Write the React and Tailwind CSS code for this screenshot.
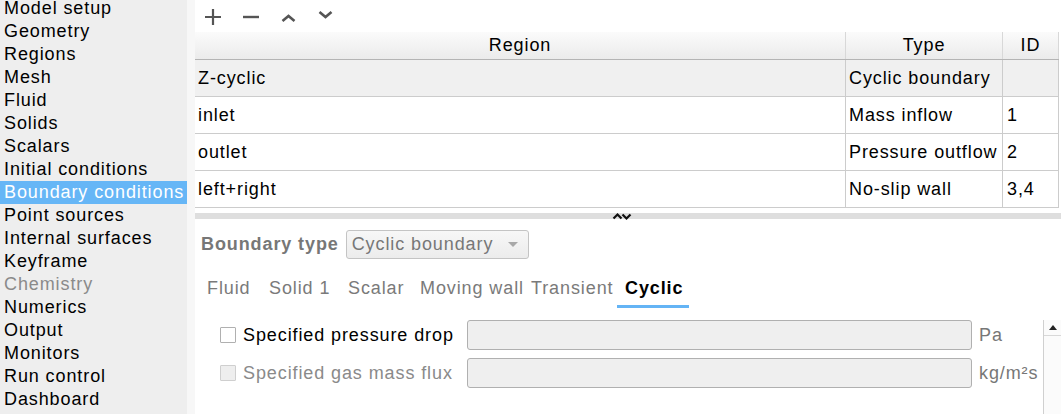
import React from 'react';

// Case setup window: section list on the left, region table + boundary editor on the right.
const sections = [
  'Model setup', 'Geometry', 'Regions', 'Mesh', 'Fluid', 'Solids', 'Scalars',
  'Initial conditions', 'Boundary conditions', 'Point sources', 'Internal surfaces',
  'Keyframe', 'Chemistry', 'Numerics', 'Output', 'Monitors', 'Run control', 'Dashboard',
];

const regions = [
  { name: 'Z-cyclic', type: 'Cyclic boundary', id: '', selected: true },
  { name: 'inlet', type: 'Mass inflow', id: '1' },
  { name: 'outlet', type: 'Pressure outflow', id: '2' },
  { name: 'left+right', type: 'No-slip wall', id: '3,4' },
];

const tabs = [
  { label: 'Fluid', w: 'w-[62px]' },
  { label: 'Solid 1', w: 'w-[79px]' },
  { label: 'Scalar', w: 'w-[72px]' },
  { label: 'Moving wall', w: 'w-[111px]' },
  { label: 'Transient', w: 'w-[94px]' },
  { label: 'Cyclic', w: 'w-[72px]', active: true },
];

function Sidebar() {
  return (
    <nav className="w-[187px] shrink-0 bg-[#eeeeee]">
      <ul>
        {sections.map(function (s, i) {
          const active = s === 'Boundary conditions';
          const muted = s === 'Chemistry';
          // list is scrolled a few pixels, so the first row shows shorter
          const size = i === 0 ? 'h-[20px] leading-[17px]' : 'h-[23px] leading-[23px]';
          return (
            <li
              key={s}
              className={
                size + ' pl-[4px] whitespace-nowrap ' +
                (active ? 'bg-[#66b6f6] text-white' : muted ? 'text-[#8a8a8a]' : 'text-black')
              }
            >
              {s}
            </li>
          );
        })}
      </ul>
    </nav>
  );
}

function Toolbar() {
  return (
    <div className="flex h-[32px] items-center pl-[9px] text-[#555]">
      <svg width="18" height="18" viewBox="0 0 18 18" className="mt-[1px]">
        <path d="M9 1v16M1 9h16" stroke="currentColor" strokeWidth="2.2" />
      </svg>
      <svg width="18" height="18" viewBox="0 0 18 18" className="ml-[20px] mt-[1px]">
        <path d="M1 9h16" stroke="currentColor" strokeWidth="2.4" />
      </svg>
      <svg width="15" height="8" viewBox="0 0 15 8" className="ml-[21px] mt-[4px]">
        <path d="M1.5 7L7.5 2l6 5" stroke="currentColor" strokeWidth="2.6" fill="none" />
      </svg>
      <svg width="15" height="8" viewBox="0 0 15 8" className="ml-[22px] -mt-[2px]">
        <path d="M1.5 1l6 5 6-5" stroke="currentColor" strokeWidth="2.6" fill="none" />
      </svg>
    </div>
  );
}

function RegionTable() {
  return (
    <div className="w-[864px]">
      <div className="grid h-[28px] grid-cols-[651px_157px_56px] border-b border-[#b4b4b4] bg-gradient-to-b from-[#fbfbfb] to-[#ebebeb] leading-[27px]">
        <div className="border-r border-[#d8d8d8] text-center">Region</div>
        <div className="border-r border-[#d8d8d8] text-center">Type</div>
        <div className="border-r border-[#d8d8d8] text-center">ID</div>
      </div>
      {regions.map(function (r) {
        return (
          <div
            key={r.name}
            className={
              'grid h-[37px] grid-cols-[651px_157px_56px] border-b border-[#cccccc] leading-[36px] ' +
              (r.selected ? 'bg-[#f0f0f0]' : 'bg-white')
            }
          >
            <div className="border-r border-[#cccccc] pl-[3px]">{r.name}</div>
            <div className="border-r border-[#cccccc] pl-[3px] whitespace-nowrap">{r.type}</div>
            <div className="border-r border-[#cccccc] pl-[4px]">{r.id}</div>
          </div>
        );
      })}
    </div>
  );
}

function Splitter() {
  return (
    <div className="mt-[5px] flex h-[6px] justify-center bg-[#dedede] pr-[10px]">
      <svg width="20" height="10" viewBox="0 0 20 10" className="-mt-[1px] ml-[-2px]">
        <path d="M1.5 6.5L5.5 2.5l4 4M10.5 2.5l4 4 4-4" stroke="#111" strokeWidth="2.2" fill="none" />
      </svg>
    </div>
  );
}

function FieldRow({ label, unit, disabled }) {
  return (
    <div className="flex h-[30px] items-center pl-[25px]">
      <span
        className={
          'h-[16px] w-[16px] shrink-0 rounded-[1px] border ' +
          (disabled ? 'border-[#cfcfcf] bg-[#eeeeee]' : 'border-[#b0b0b0] bg-white')
        }
      />
      <span className={'ml-[7px] w-[224px] whitespace-nowrap ' + (disabled ? 'text-[#8a8a8a]' : 'text-black')}>
        {label}
      </span>
      <div className="h-[30px] w-[505px] shrink-0 rounded-[3px] border border-[#b0b0b0] bg-[#efefef]" />
      <span className="ml-[7px] whitespace-nowrap text-[#777]">{unit}</span>
    </div>
  );
}

function BoundaryEditor() {
  return (
    <div className="flex flex-1 flex-col">
      <div className="mt-[11px] flex h-[29px] items-center pl-[6px]">
        <span className="font-bold text-[#777]">Boundary type</span>
        <div className="ml-[7px] flex h-[29px] w-[183px] items-center justify-between rounded-[3px] border border-[#c4c4c4] bg-gradient-to-b from-[#f7f7f7] to-[#ececec] pl-[5px] pr-[10px] text-[#777]">
          <span>Cyclic boundary</span>
          <svg width="10" height="5" viewBox="0 0 10 5">
            <path d="M0 0h10L5 5z" fill="#a8a8a8" />
          </svg>
        </div>
      </div>

      <div className="mt-[13px] flex pl-[4px]">
        {tabs.map(function (t) {
          return (
            <div
              key={t.label}
              className={
                'h-[36px] shrink-0 pl-[8px] leading-[33px] whitespace-nowrap border-b-[3px] ' + t.w + ' ' +
                (t.active ? 'border-[#64b4f5] font-bold text-black' : 'border-transparent text-[#7a7a7a]')
              }
            >
              {t.label}
            </div>
          );
        })}
      </div>

      <div className="mt-[12px] flex flex-1">
        <div className="flex flex-1 flex-col gap-[8px]">
          <FieldRow label="Specified pressure drop" unit="Pa" />
          <FieldRow label="Specified gas mass flux" unit="kg/m²s" disabled />
        </div>
        <div className="flex w-[18px] flex-col border-l border-[#d0d0d0] bg-[#fbfbfb]">
          <div className="flex h-[16px] items-center justify-center border-b border-[#d8d8d8]">
            <svg width="8" height="5" viewBox="0 0 8 5">
              <path d="M0 5h8L4 0z" fill="#222" />
            </svg>
          </div>
        </div>
      </div>
    </div>
  );
}

export default function App() {
  return (
    <div
      className="flex h-[414px] w-[1061px] overflow-hidden bg-white text-[18px] tracking-[0.9px] text-black"
      style={{ fontFamily: '"Liberation Sans", Arial, sans-serif' }}
    >
      <Sidebar />
      <div className="w-[8px] shrink-0 bg-[#f7f7f7]" />
      <main className="flex min-w-0 flex-1 flex-col">
        <Toolbar />
        <RegionTable />
        <Splitter />
        <BoundaryEditor />
      </main>
    </div>
  );
}
